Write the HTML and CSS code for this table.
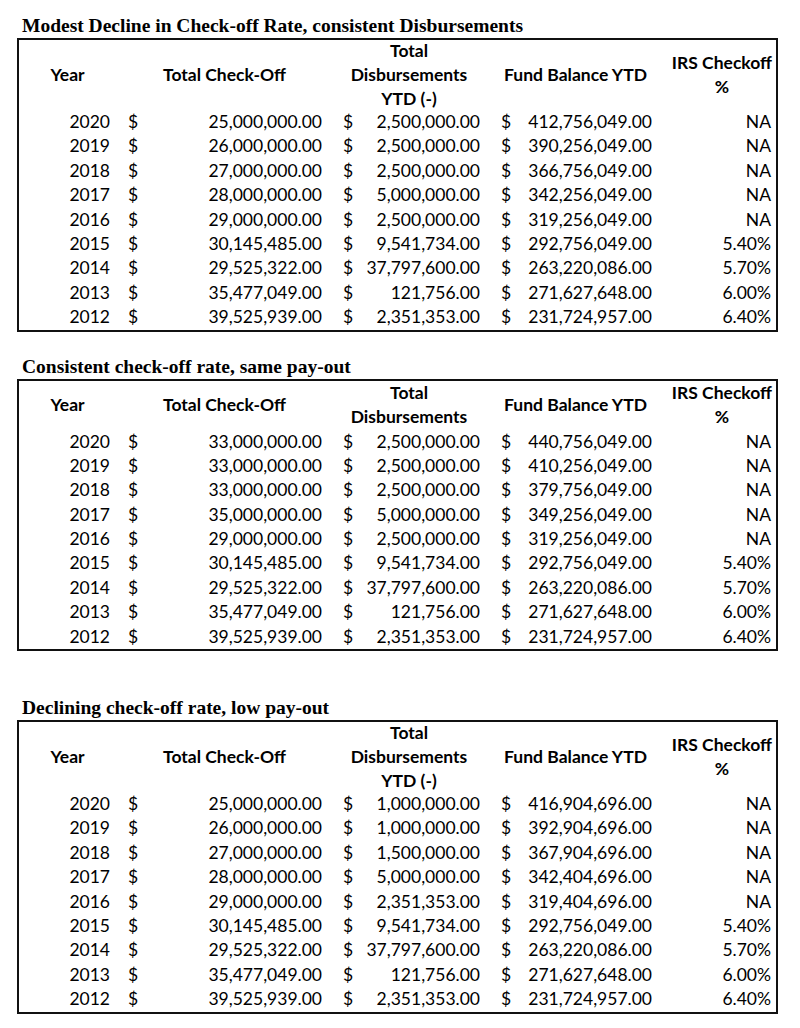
FILE: index.html
```html
<!DOCTYPE html>
<html>
<head>
<meta charset="utf-8">
<link rel="stylesheet" href="styles.css">
</head>
<body>
<div class="page">

<section class="block first">
  <h2 class="title">Modest Decline in Check-off Rate, consistent Disbursements</h2>
  <div class="sheet three">
    <div class="hd year">Year</div>
    <div class="hd tco">Total Check-Off</div>
    <div class="hd disb">Total<br>Disbursements<br>YTD (-)</div>
    <div class="hd fund">Fund Balance YTD</div>
    <div class="hd irs"><span class="irs-text">IRS Checkoff<br>%</span></div>

    <div class="yr">2020</div><div class="cur c1">$</div><div class="num n1">25,000,000.00</div><div class="cur c2">$</div><div class="num n2">2,500,000.00</div><div class="cur c3">$</div><div class="num n3">412,756,049.00</div><div class="pct">NA</div>
    <div class="yr">2019</div><div class="cur c1">$</div><div class="num n1">26,000,000.00</div><div class="cur c2">$</div><div class="num n2">2,500,000.00</div><div class="cur c3">$</div><div class="num n3">390,256,049.00</div><div class="pct">NA</div>
    <div class="yr">2018</div><div class="cur c1">$</div><div class="num n1">27,000,000.00</div><div class="cur c2">$</div><div class="num n2">2,500,000.00</div><div class="cur c3">$</div><div class="num n3">366,756,049.00</div><div class="pct">NA</div>
    <div class="yr">2017</div><div class="cur c1">$</div><div class="num n1">28,000,000.00</div><div class="cur c2">$</div><div class="num n2">5,000,000.00</div><div class="cur c3">$</div><div class="num n3">342,256,049.00</div><div class="pct">NA</div>
    <div class="yr">2016</div><div class="cur c1">$</div><div class="num n1">29,000,000.00</div><div class="cur c2">$</div><div class="num n2">2,500,000.00</div><div class="cur c3">$</div><div class="num n3">319,256,049.00</div><div class="pct">NA</div>
    <div class="yr">2015</div><div class="cur c1">$</div><div class="num n1">30,145,485.00</div><div class="cur c2">$</div><div class="num n2">9,541,734.00</div><div class="cur c3">$</div><div class="num n3">292,756,049.00</div><div class="pct">5.40%</div>
    <div class="yr">2014</div><div class="cur c1">$</div><div class="num n1">29,525,322.00</div><div class="cur c2">$</div><div class="num n2">37,797,600.00</div><div class="cur c3">$</div><div class="num n3">263,220,086.00</div><div class="pct">5.70%</div>
    <div class="yr">2013</div><div class="cur c1">$</div><div class="num n1">35,477,049.00</div><div class="cur c2">$</div><div class="num n2">121,756.00</div><div class="cur c3">$</div><div class="num n3">271,627,648.00</div><div class="pct">6.00%</div>
    <div class="yr">2012</div><div class="cur c1">$</div><div class="num n1">39,525,939.00</div><div class="cur c2">$</div><div class="num n2">2,351,353.00</div><div class="cur c3">$</div><div class="num n3">231,724,957.00</div><div class="pct">6.40%</div>
  </div>
</section>

<section class="block second">
  <h2 class="title">Consistent check-off rate, same pay-out</h2>
  <div class="sheet two">
    <div class="hd year">Year</div>
    <div class="hd tco">Total Check-Off</div>
    <div class="hd disb">Total<br>Disbursements</div>
    <div class="hd fund">Fund Balance YTD</div>
    <div class="hd irs"><span class="irs-text">IRS Checkoff<br>%</span></div>

    <div class="yr">2020</div><div class="cur c1">$</div><div class="num n1">33,000,000.00</div><div class="cur c2">$</div><div class="num n2">2,500,000.00</div><div class="cur c3">$</div><div class="num n3">440,756,049.00</div><div class="pct">NA</div>
    <div class="yr">2019</div><div class="cur c1">$</div><div class="num n1">33,000,000.00</div><div class="cur c2">$</div><div class="num n2">2,500,000.00</div><div class="cur c3">$</div><div class="num n3">410,256,049.00</div><div class="pct">NA</div>
    <div class="yr">2018</div><div class="cur c1">$</div><div class="num n1">33,000,000.00</div><div class="cur c2">$</div><div class="num n2">2,500,000.00</div><div class="cur c3">$</div><div class="num n3">379,756,049.00</div><div class="pct">NA</div>
    <div class="yr">2017</div><div class="cur c1">$</div><div class="num n1">35,000,000.00</div><div class="cur c2">$</div><div class="num n2">5,000,000.00</div><div class="cur c3">$</div><div class="num n3">349,256,049.00</div><div class="pct">NA</div>
    <div class="yr">2016</div><div class="cur c1">$</div><div class="num n1">29,000,000.00</div><div class="cur c2">$</div><div class="num n2">2,500,000.00</div><div class="cur c3">$</div><div class="num n3">319,256,049.00</div><div class="pct">NA</div>
    <div class="yr">2015</div><div class="cur c1">$</div><div class="num n1">30,145,485.00</div><div class="cur c2">$</div><div class="num n2">9,541,734.00</div><div class="cur c3">$</div><div class="num n3">292,756,049.00</div><div class="pct">5.40%</div>
    <div class="yr">2014</div><div class="cur c1">$</div><div class="num n1">29,525,322.00</div><div class="cur c2">$</div><div class="num n2">37,797,600.00</div><div class="cur c3">$</div><div class="num n3">263,220,086.00</div><div class="pct">5.70%</div>
    <div class="yr">2013</div><div class="cur c1">$</div><div class="num n1">35,477,049.00</div><div class="cur c2">$</div><div class="num n2">121,756.00</div><div class="cur c3">$</div><div class="num n3">271,627,648.00</div><div class="pct">6.00%</div>
    <div class="yr">2012</div><div class="cur c1">$</div><div class="num n1">39,525,939.00</div><div class="cur c2">$</div><div class="num n2">2,351,353.00</div><div class="cur c3">$</div><div class="num n3">231,724,957.00</div><div class="pct">6.40%</div>
  </div>
</section>

<section class="block third">
  <h2 class="title">Declining check-off rate, low pay-out</h2>
  <div class="sheet three">
    <div class="hd year">Year</div>
    <div class="hd tco">Total Check-Off</div>
    <div class="hd disb">Total<br>Disbursements<br>YTD (-)</div>
    <div class="hd fund">Fund Balance YTD</div>
    <div class="hd irs"><span class="irs-text">IRS Checkoff<br>%</span></div>

    <div class="yr">2020</div><div class="cur c1">$</div><div class="num n1">25,000,000.00</div><div class="cur c2">$</div><div class="num n2">1,000,000.00</div><div class="cur c3">$</div><div class="num n3">416,904,696.00</div><div class="pct">NA</div>
    <div class="yr">2019</div><div class="cur c1">$</div><div class="num n1">26,000,000.00</div><div class="cur c2">$</div><div class="num n2">1,000,000.00</div><div class="cur c3">$</div><div class="num n3">392,904,696.00</div><div class="pct">NA</div>
    <div class="yr">2018</div><div class="cur c1">$</div><div class="num n1">27,000,000.00</div><div class="cur c2">$</div><div class="num n2">1,500,000.00</div><div class="cur c3">$</div><div class="num n3">367,904,696.00</div><div class="pct">NA</div>
    <div class="yr">2017</div><div class="cur c1">$</div><div class="num n1">28,000,000.00</div><div class="cur c2">$</div><div class="num n2">5,000,000.00</div><div class="cur c3">$</div><div class="num n3">342,404,696.00</div><div class="pct">NA</div>
    <div class="yr">2016</div><div class="cur c1">$</div><div class="num n1">29,000,000.00</div><div class="cur c2">$</div><div class="num n2">2,351,353.00</div><div class="cur c3">$</div><div class="num n3">319,404,696.00</div><div class="pct">NA</div>
    <div class="yr">2015</div><div class="cur c1">$</div><div class="num n1">30,145,485.00</div><div class="cur c2">$</div><div class="num n2">9,541,734.00</div><div class="cur c3">$</div><div class="num n3">292,756,049.00</div><div class="pct">5.40%</div>
    <div class="yr">2014</div><div class="cur c1">$</div><div class="num n1">29,525,322.00</div><div class="cur c2">$</div><div class="num n2">37,797,600.00</div><div class="cur c3">$</div><div class="num n3">263,220,086.00</div><div class="pct">5.70%</div>
    <div class="yr">2013</div><div class="cur c1">$</div><div class="num n1">35,477,049.00</div><div class="cur c2">$</div><div class="num n2">121,756.00</div><div class="cur c3">$</div><div class="num n3">271,627,648.00</div><div class="pct">6.00%</div>
    <div class="yr">2012</div><div class="cur c1">$</div><div class="num n1">39,525,939.00</div><div class="cur c2">$</div><div class="num n2">2,351,353.00</div><div class="cur c3">$</div><div class="num n3">231,724,957.00</div><div class="pct">6.40%</div>
  </div>
</section>

</div>
</body>
</html>
```

FILE: styles.css
```css
html, body {
  margin: 0;
  padding: 0;
  background: #ffffff;
  color: #000000;
}

.page {
  padding-left: 17px;
  width: 761px;
}

.block.first { padding-top: 16px; }
.block.second { margin-top: 25px; }
.block.third { margin-top: 47px; }

.title {
  margin: 0 0 2px 0;
  padding-left: 5px;
  font-family: "Liberation Serif", "Times New Roman", serif;
  font-weight: bold;
  font-size: 19.5px;
  line-height: 20px;
  white-space: nowrap;
}

.sheet {
  border: 2px solid #111111;
  display: grid;
  grid-template-columns: 100px 21px 190px 25px 133px 24px 151px 113px;
  font-family: Lato, "Open Sans", sans-serif;
  font-size: 17.5px;
  white-space: nowrap;
}

.sheet.three {
  grid-template-rows: 70px repeat(9, 24.4px);
}

.sheet.two {
  grid-template-rows: 49px repeat(9, 24.4px);
}

.hd {
  font-weight: bold;
  line-height: 24px;
  display: flex;
  align-items: center;
  justify-content: center;
  text-align: center;
}

.hd.year { grid-column: 1 / 2; padding-right: 3px; }
.hd.tco { grid-column: 2 / 4; }
.hd.disb { grid-column: 4 / 6; }
.hd.fund { grid-column: 6 / 8; }
.hd.irs {
  grid-column: 8 / 9;
  justify-content: flex-end;
  padding-right: 4px;
}

.irs-text {
  display: inline-block;
  text-align: center;
}

.yr, .cur, .num, .pct {
  line-height: 24.4px;
}

.yr {
  text-align: right;
  padding-right: 9px;
}

.cur { text-align: left; }
.cur.c1 { padding-left: 9px; }
.cur.c2 { padding-left: 13px; }
.cur.c3 { padding-left: 13px; }

.num { text-align: right; }
.num.n1 { padding-right: 8px; }
.num.n2 { padding-right: 8px; }
.num.n3 { padding-right: 11px; }

.pct {
  text-align: right;
  padding-right: 5px;
}
```
